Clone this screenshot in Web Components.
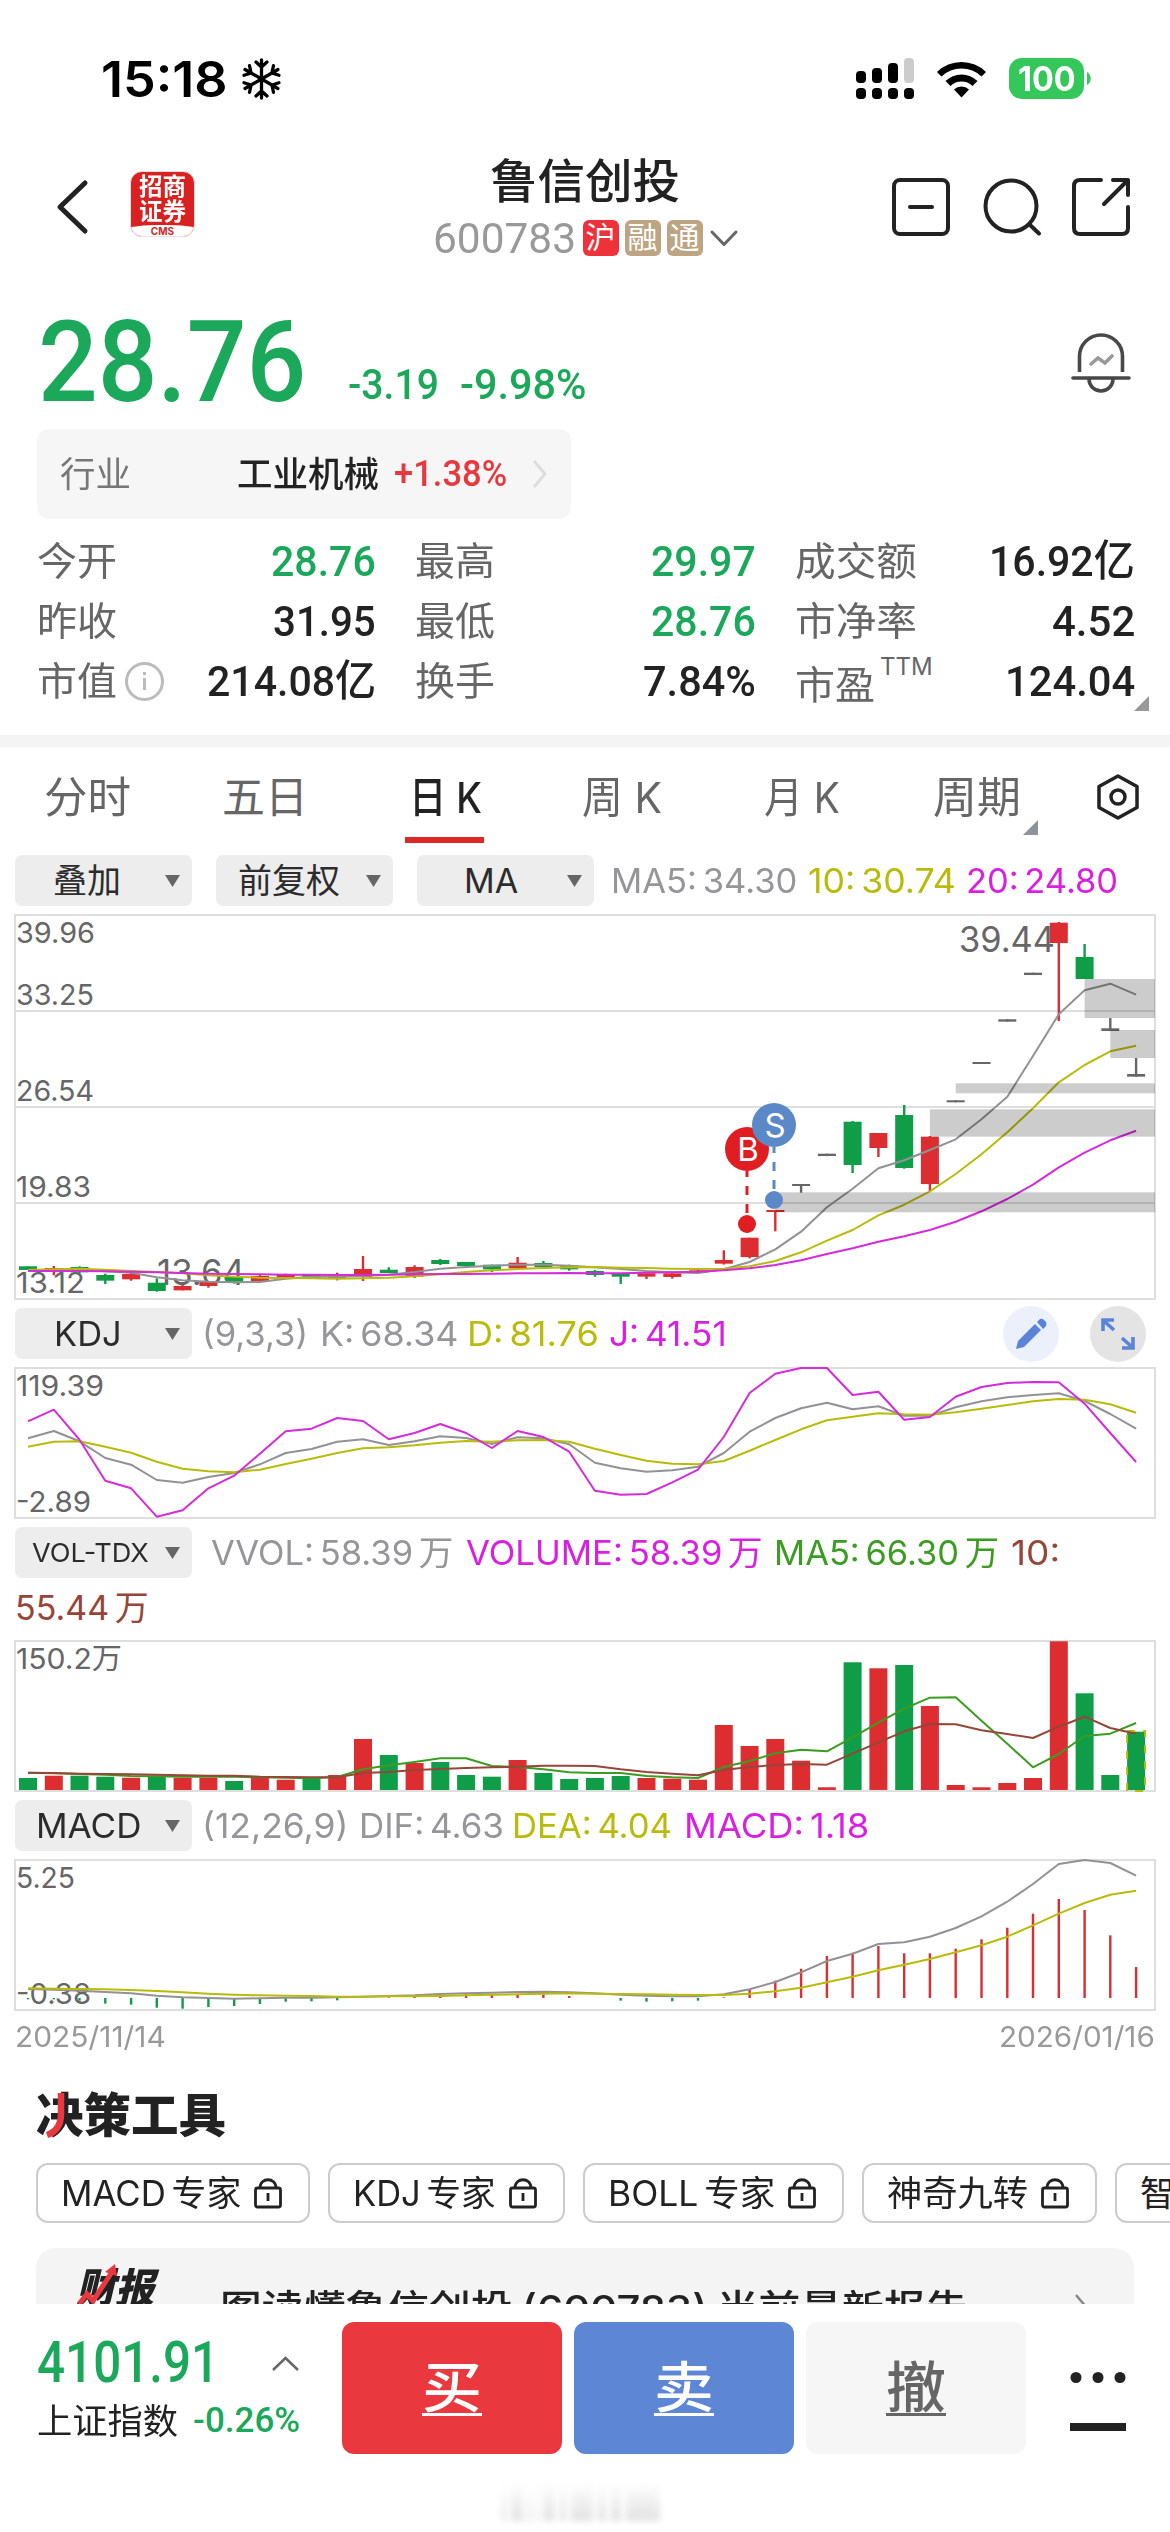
<!DOCTYPE html>
<html lang="zh-CN">
<head>
<meta charset="utf-8">
<meta name="viewport" content="width=1170">
<title>鲁信创投 600783</title>
<style>
   html, body {
      margin: 0;
      padding: 0;
      background: #fff;
   }
   body {
      width: 1170px;
      height: 2532px;
      overflow: hidden;
      --ui: Inter, "Noto Sans CJK SC", sans-serif;
      --num: Roboto, "Noto Sans CJK SC", sans-serif;
      --green: #1ba85a;
      --red: #e8383d;
      --ink: #222;
      --grey: #666;
      font-family: var(--ui);
      color: var(--ink);
   }
</style>
</head>
<body>
<stock-page></stock-page>

<script>
class Part extends HTMLElement {
   constructor() {
      super();
      this.shadow = this.attachShadow({ mode: "open" });
      const template = document.createElement("template");
      template.innerHTML = `<style>
         *, *::before, *::after { box-sizing: border-box; }
         :host { display: flex; box-sizing: border-box; white-space: nowrap; }
         svg { display: block; flex: none; overflow: visible; }
         svg:not([fill]) { fill: none; }
         ${this.css()}</style>${this.html()}`;
      this.shadow.appendChild(template.content.cloneNode(true));
   }
   css() { return ""; }
   html() { return "<slot></slot>"; }
}

/* text squeezed or stretched to a given width: <fit-text w="120"> */
class FitText extends Part {
   css() {
      return `
      :host { display: block; flex: none; }
      span { display: inline-block; transform-origin: 0 50%; }
      `;
   }
   html() { return `<span><slot></slot></span>`; }
   connectedCallback() {
      const span = this.shadow.querySelector("span");
      const w = Number(this.getAttribute("w"));
      const natural = span.offsetWidth;
      this.style.width = `${w}px`;
      if (natural) span.style.transform = `scaleX(${w / natural})`;
   }
}

class StatusBar extends Part {
   css() {
      return `
      :host { height: 140px; padding: 17px 79px 0 101px; align-items: center; color: #000; }
      .time { font-size: 50px; line-height: 60px; font-weight: 600; }
      .flake { margin-left: 15px; }
      .signal { margin-left: auto; }
      .wifi { margin-left: 22px; }
      .battery {
         width: 75px; height: 41px; margin-left: 22px; border-radius: 13px; background: #34c759;
         color: #fff; font-size: 34px; line-height: 41px; font-weight: 700;
         display: flex; justify-content: center;
      }
      .nub { margin-left: 3px; }
      `;
   }
   html() {
      const arm = `<path d="M0 0V-19M-5.500-17L0-12L5.500-17"/>`;
      const arms = [0, 60, 120, 180, 240, 300].map((a) => `<g transform="rotate(${a})">${arm}</g>`).join("");
      return `
      <fit-text class="time" w="127">15:18</fit-text>
      <svg class="flake" width="37" height="42" viewBox="-18.5 -21 37 42" stroke="#000" stroke-width="3.300" stroke-linecap="round" stroke-linejoin="round">${arms}</svg>
      <svg class="signal" width="58" height="41" fill="#000">
         <rect y="13" width="10" height="12" rx="4"/><rect x="16" y="10" width="10" height="15" rx="4"/>
         <rect x="32" y="5" width="10" height="20" rx="4"/><rect x="48" width="10" height="25" rx="4" fill="#ccc"/>
         <rect y="30" width="10" height="11" rx="4"/><rect x="16" y="30" width="10" height="11" rx="4"/>
         <rect x="32" y="30" width="10" height="11" rx="4"/><rect x="48" y="30" width="10" height="11" rx="4"/>
      </svg>
      <svg class="wifi" width="51" height="38" viewBox="0 0 51 38" fill="#000">
         <path d="M1 12A35 35 0 0 1 50 12L45.500 16.500A29 29 0 0 0 5.500 16.500Z"/>
         <path d="M9.500 21A23 23 0 0 1 41.500 21L36.500 26A16 16 0 0 0 14.500 26Z"/>
         <path d="M18 29.500A11 11 0 0 1 33 29.500L25.500 37.500Z"/>
      </svg>
      <div class="battery"><fit-text w="58">100</fit-text></div>
      <svg class="nub" width="4" height="13"><path d="M0 0C5 3 5 10 0 13Z" fill="#34c759"/></svg>
      `;
   }
}

class NavBar extends Part {
   css() {
      return `
      :host { height: 140px; padding: 0 40px 0 57px; justify-content: space-between; }
      svg { stroke: #222; stroke-width: 4; stroke-linecap: round; stroke-linejoin: round; }
      .side { display: flex; width: 240px; padding-top: 38px; }
      .right { justify-content: flex-end; gap: 32px; width: 260px; }
      .back { margin-top: 3px; }
      .logo {
         width: 65px; height: 66px; margin: -7px 0 0 43px; border-radius: 12px; overflow: hidden;
         background: #d92121; color: #fff; font-weight: 700; font-size: 24px; line-height: 25px; text-align: center;
         border: 1px solid #f1dede; padding-top: 2px;
      }
      .logo small { display: block; height: 14px; margin-top: 1px; background: #fff; color: #c8282b; font-size: 10px; line-height: 12px; border-radius: 28px 28px 0 0 / 3px 3px 0 0; }
      .logo fit-text { margin: 0 auto; }
      .mid { display: flex; flex-direction: column; align-items: center; width: 320px; }
      .name { font-size: 47px; line-height: 60px; margin: 11px 0 0 2px; font-weight: 500; }
      .code { display: flex; align-items: center; height: 54px; margin-left: 2px; color: #999; font: 43px/54px var(--num); }
      .tag { width: 36px; height: 36px; border-radius: 6px; background: #bda583; color: #fff; font-size: 30px; line-height: 36px; text-align: center; margin-left: 6px; }
      .tag.sh { background: #ef3239; margin-left: 7px; }
      .code svg { margin-left: 8px; stroke: #666; stroke-width: 3; }
      `;
   }
   html() {
      return `
      <div class="side">
         <svg class="back" width="30" height="52"><path d="M28 2L3 26L28 50" stroke-width="5"/></svg>
         <div class="logo"><fit-text w="47">招商</fit-text><fit-text w="47">证券</fit-text><small>CMS</small></div>
      </div>
      <div class="mid">
         <fit-text class="name" w="190">鲁信创投</fit-text>
         <div class="code"><fit-text w="143">600783</fit-text>
            <div class="tag sh">沪</div><div class="tag">融</div><div class="tag">通</div>
            <svg width="26" height="15"><path d="M1 1L13 13.500L25 1"/></svg>
         </div>
      </div>
      <div class="side right">
         <svg width="58" height="58"><rect x="2" y="2" width="54" height="54" rx="6"/><path d="M18 29H40"/></svg>
         <svg width="58" height="58"><circle cx="29" cy="28" r="25.500"/><path d="M47.500 46.500L57 55.500"/></svg>
         <svg width="58" height="58"><path d="M29 2H8Q2 2 2 8V50Q2 56 8 56H50Q56 56 56 50V29M41 2H56V17M56 2L32 26"/></svg>
      </div>
      `;
   }
}

class PriceHead extends Part {
   css() {
      return `
      :host { height: 149px; padding: 0 39px 0 38px; color: var(--green); font-family: var(--num); font-weight: 500; }
      .price { font-size: 113px; line-height: 120px; margin-top: 23px; }
      .diff { font-size: 43px; line-height: 50px; margin-top: 79px; margin-left: 42px; }
      .pct { margin-left: 21px; }
      svg { margin: 53px 0 0 auto; }
      `;
   }
   html() {
      return `
      <fit-text class="price" w="268">28.76</fit-text>
      <fit-text class="diff" w="91">-3.19</fit-text>
      <fit-text class="diff pct" w="127">-9.98%</fit-text>
      <svg width="60" height="61" stroke="#484848" stroke-width="3.600" stroke-linecap="round">
         <path d="M8.500 39V23.500A21.500 21.500 0 0 1 51.500 23.500V39" stroke-linecap="butt"/><path d="M2 45H58M18 46A12 12 0 0 0 42 46"/>
         <path d="M20 31L27 25L34 30L41 23" stroke="#999"/>
      </svg>
      `;
   }
}

class IndustryStrip extends Part {
   css() {
      return `
      :host { width: 534px; height: 90px; margin-left: 37px; border-radius: 12px; background: #f6f6f6; padding: 0 23px; align-items: center; font-size: 35px; line-height: 60px; }
      .label { color: #777; }
      .name { margin-left: 106px; font-weight: 500; }
      .pct { margin-left: 15px; font: 500 37px/60px var(--num); color: var(--red); }
      svg { margin-left: auto; }
      `;
   }
   html() {
      return `
      <fit-text class="label" w="71">行业</fit-text>
      <fit-text class="name" w="142">工业机械</fit-text>
      <fit-text class="pct" w="113">+1.38%</fit-text>
      <svg width="16" height="30"><path d="M2 2L13 15L2 28" stroke="#ddd" stroke-width="3"/></svg>
      `;
   }
}

class QuoteCell extends Part {
   css() {
      return `
      :host { height: 60px; justify-content: space-between; align-items: center; font-size: 39px; line-height: 60px; color: var(--grey); }
      .label { display: flex; align-items: center; }
      .val { font: 500 43px/60px var(--num); color: var(--ink); }
      .val.down { color: var(--green); }
      sup { font-size: 24px; line-height: 30px; margin: -28px 0 0 5px; }
      .sunk { margin-top: 7px; }
      svg { margin-left: 8px; }
      `;
   }
   html() {
      const attr = (name) => this.getAttribute(name);
      const sup = attr("sup");
      const info = this.hasAttribute("info")
         ? `<svg width="39" height="39" stroke="#bbb" stroke-width="3"><circle cx="19.500" cy="19.500" r="18"/><path d="M19.500 16V28M19.500 10V13"/></svg>`
         : "";
      return `
      <div class="label"><fit-text class="${sup ? "sunk" : ""}" w="${attr("lw")}">${attr("label")}</fit-text>${sup ? `<sup>${sup}</sup>` : ""}${info}</div>
      <fit-text class="val ${attr("tone") || ""}" w="${attr("vw")}">${attr("value")}</fit-text>
      `;
   }
}

class QuoteGrid extends Part {
   css() {
      return `
      :host { display: grid; height: 216px; padding: 12px 35px 0 37px; grid-template-columns: 339px 341px 340px; grid-auto-rows: 60px; column-gap: 39px; position: relative; }
      svg { position: absolute; right: 21px; bottom: 24px; }
      `;
   }
   html() {
      const cells = [
         ["今开", 80, "28.76", 105, `tone="down"`], ["最高", 80, "29.97", 105, `tone="down"`], ["成交额", 122, "16.92亿", 146, ""],
         ["昨收", 80, "31.95", 103, ""], ["最低", 80, "28.76", 105, `tone="down"`], ["市净率", 122, "4.52", 83, ""],
         ["市值", 80, "214.08亿", 169, "info"], ["换手", 80, "7.84%", 113, ""], ["市盈", 80, "124.04", 130, `sup="TTM"`],
      ];
      return cells.map(([label, lw, value, vw, extra]) =>
         `<quote-cell label="${label}" lw="${lw}" value="${value}" vw="${vw}" ${extra}></quote-cell>`).join("")
         + `<svg width="15" height="15"><path d="M15 0V15H0Z" fill="#999"/></svg>`;
   }
}

class PeriodTabs extends Part {
   css() {
      return `
      :host { height: 120px; border-top: 12px solid #f4f4f4; padding-left: 44px; font-size: 43px; line-height: 60px; color: var(--grey); }
      div { padding-top: 20px; height: 96px; position: relative; margin-right: var(--gap); }
      .on { color: var(--ink); font-weight: 500; border-bottom: 6px solid #e02828; padding-left: 4px; padding-right: 2px; }
      .corner { position: absolute; right: -17px; bottom: 8px; }
      .hex { margin-top: 27px; }
      `;
   }
   html() {
      return `
      <div style="--gap:91px"><fit-text w="87">分时</fit-text></div>
      <div style="--gap:97px"><fit-text w="86">五日</fit-text></div>
      <div class="on" style="--gap:98px"><fit-text w="73">日 K</fit-text></div>
      <div style="--gap:102px"><fit-text w="80">周 K</fit-text></div>
      <div style="--gap:93px"><fit-text w="76">月 K</fit-text></div>
      <div style="--gap:75px"><fit-text w="88">周期</fit-text><svg class="corner" width="15" height="15"><path d="M15 0V15H0Z" fill="#8c939b"/></svg></div>
      <svg class="hex" width="44" height="46" stroke="#222" stroke-width="3.500" stroke-linejoin="round"><path d="M22 2L41 12.500V33.500L22 44L3 33.500V12.500Z"/><circle cx="22" cy="23" r="7"/></svg>
      `;
   }
}

/* grey dropdown in front of each indicator line */
class DropButton extends Part {
   css() {
      return `
      :host { width: 177px; height: 51px; flex: none; border-radius: 7px; background: #ededed; align-items: center; font-size: 34px; line-height: 51px; color: #2c2c2c; }
      .box { flex: 1; display: flex; justify-content: center; padding-right: var(--pull, 0px); }
      svg { margin-right: 12px; }
      `;
   }
   html() {
      return `<div class="box"><slot></slot></div><svg width="15" height="12"><path d="M0 0H15L7.500 12Z" fill="#666"/></svg>`;
   }
}

/* row of indicator values; the colour name is the attribute of each child */
class IndicatorRow extends Part {
   css() {
      return `
      :host { height: 51px; padding-left: 15px; align-items: center; font-size: 34px; line-height: 51px; word-spacing: -4px; }
      ::slotted([grey]) { color: #969699; }
      ::slotted([olive]) { color: #b9bb0b; }
      ::slotted([pink]) { color: #d91fdf; }
      ::slotted([moss]) { color: #3b9c22; }
      ::slotted([rust]) { color: #964538; }
      `;
   }
}

const PITCH = 25.77; // distance between candles
const FIRST = 13; // centre of first candle
const px = (i) => (FIRST + PITCH * i).toFixed(1);

/* Frame with a plot. Series values count thirds of a pixel downwards, "zero" is the value at the frame's top. */
class PlotPanel extends Part {
   css() {
      return `
      :host { height: ${this.h}px; margin: 0 15px; }
      text { font-family: var(--ui); font-size: 29px; fill: #666; }
      .ln { stroke-width: 2; stroke-linejoin: round; }
      `;
   }
   py(v) { return ((v - this.zero) / 3).toFixed(1); }
   line(values, color, width = 2) {
      const pts = values.map((v, i) => `${px(i)},${this.py(v)}`).join(" ");
      return `<polyline class="ln" points="${pts}" stroke="${color}" stroke-width="${width}"/>`;
   }
   bar(i, from, to, color, width = 18) {
      const top = Math.min(from, to);
      return `<rect x="${px(i) - width / 2}" y="${this.py(top)}" width="${width}" height="${Math.max(Math.abs(to - from) / 3, 0.7)}" fill="${color}"/>`;
   }
   label(text, x, y, w, size = 29) {
      return `<text x="${x}" y="${y}" textLength="${w}" lengthAdjust="spacingAndGlyphs" style="font-size:${size}px">${text}</text>`;
   }
   html() {
      return `<svg width="1140" height="${this.h}"><rect x="0" y="0" width="1140" height="${this.h}" stroke="#dedede" stroke-width="2"/>${this.plot()}</svg>`;
   }
}

class CandleChart extends PlotPanel {
   get h() { return 384; }
   get zero() { return 45; }
   plot() {
      const R = "#dc2d30", G = "#0f9d48", K = "#666";
      // colour, body top, body bottom, wick top, wick bottom
      const candles = [
         [G, 1099, 1110, 1099, 1110], [R, 1104, 1112, 1098, 1126], [G, 1101, 1117, 1099, 1120], [G, 1125, 1142, 1121, 1152],
         [R, 1122, 1138, 1118, 1142], [G, 1148, 1173, 1135, 1175], [R, 1158, 1171, 1154, 1171], [R, 1146, 1158, 1143, 1163],
         [G, 1132, 1147, 1129, 1151], [R, 1128, 1144, 1124, 1147], [R, 1122, 1133, 1121, 1133], [G, 1124, 1134, 1122, 1134],
         [R, 1126, 1136, 1118, 1141], [R, 1107, 1131, 1068, 1143], [G, 1109, 1119, 1102, 1119], [R, 1101, 1130, 1096, 1134],
         [G, 1080, 1092, 1077, 1095], [G, 1086, 1098, 1086, 1099], [G, 1094, 1108, 1094, 1116], [R, 1088, 1105, 1071, 1106],
         [G, 1089, 1101, 1083, 1103], [G, 1097, 1108, 1094, 1112], [G, 1113, 1125, 1110, 1130], [G, 1121, 1130, 1120, 1152],
         [R, 1120, 1130, 1120, 1137], [R, 1120, 1131, 1120, 1136], [R, 1111, 1119, 1110, 1120], [R, 1080, 1091, 1051, 1094],
         [R, 1013, 1071, 1013, 1075], [R, 930, 936, 930, 994], [K, 852, 858, 852, 878], [K, 761, 768, 761, 768],
         [G, 665, 795, 663, 819], [R, 699, 744, 699, 771], [G, 645, 804, 615, 806], [R, 710, 852, 708, 874],
         [K, 601, 607, 601, 607], [K, 486, 492, 486, 492], [K, 358, 365, 358, 365], [K, 218, 225, 218, 225],
         [R, 68, 129, 66, 363], [G, 171, 237, 132, 237], [K, 385, 393, 354, 393], [K, 522, 530, 474, 530],
      ];
      const ma5 = [1110, 1110, 1110, 1114, 1118, 1132, 1141, 1145, 1147, 1146, 1136, 1130, 1130, 1128, 1124, 1116, 1106, 1101, 1097, 1094, 1094, 1097, 1102, 1107, 1113, 1117, 1119, 1108, 1086, 1048, 995, 922, 866, 805, 781, 750, 718, 658, 590, 468, 343, 271, 251, 284];
      const ma10 = [1110, 1108, 1106, 1109, 1113, 1116, 1120, 1126, 1130, 1133, 1134, 1135, 1136, 1135, 1133, 1129, 1123, 1116, 1111, 1107, 1104, 1102, 1101, 1103, 1104, 1106, 1107, 1106, 1099, 1083, 1057, 1022, 990, 946, 914, 874, 822, 763, 697, 625, 547, 495, 454, 437];
      const ma20 = [1113, 1113, 1113, 1114, 1115, 1117, 1119, 1121, 1122, 1123, 1124, 1124, 1125, 1125, 1124, 1123, 1122, 1122, 1121, 1120, 1120, 1119, 1120, 1120, 1118, 1117, 1115, 1111, 1105, 1095, 1081, 1062, 1045, 1025, 1009, 990, 965, 934, 897, 854, 802, 758, 721, 692];
      const gaps = [[41, 237, 354], [42, 390, 474], [36, 550, 580], [35, 628, 710], [29, 877, 937]];

      let svg = [96, 192, 288].map((y) => `<path d="M0 ${y}H1140" stroke="#dedede" stroke-width="2"/>`).join("");
      svg += this.label("39.96", 1, 28, 79) + this.label("33.25", 1, 90, 78) + this.label("26.54", 1, 186, 78);
      svg += this.label("19.83", 1, 282, 75) + this.label("13.12", 1, 378, 69);
      svg += this.label("39.44", 944, 37, 96, 35) + this.label("13.64", 142, 370, 88, 35);
      candles.forEach(([color, top, bottom, high, low], i) => {
         svg += this.bar(i, high, low, color, 2.4) + this.bar(i, top, bottom, color, 18);
      });
      svg += this.line(ma5, "#929295") + this.line(ma10, "#b9bb0b") + this.line(ma20, "#d42bdb");
      gaps.forEach(([i, top, bottom]) => {
         svg += `<rect x="${px(i)}" y="${this.py(top)}" width="${1140 - px(i)}" height="${(bottom - top) / 3}" fill="#000" fill-opacity=".2"/>`;
      });
      return svg + this.marker("B", 732, 234, 309, "#e01e22") + this.marker("S", 759, 210, 285, "#5b88c7");
   }
   marker(letter, x, y, dot, color) {
      return `<path d="M${x} ${y + 22}V${dot}" stroke="${color}" stroke-width="3" stroke-dasharray="9 9" stroke-dashoffset="3"/>
         <circle cx="${x}" cy="${y}" r="22" fill="${color}"/><circle cx="${x}" cy="${dot}" r="9" fill="${color}"/>
         <text x="${x + 1}" y="${y + 12}" text-anchor="middle" style="font-size:33px;fill:#fff">${letter}</text>`;
   }
}

class KdjChart extends PlotPanel {
   get h() { return 150; }
   get zero() { return 205; }
   plot() {
      const k = [416, 394, 425, 475, 495, 541, 549, 532, 520, 494, 460, 448, 426, 419, 436, 425, 410, 415, 433, 413, 416, 434, 489, 506, 516, 512, 501, 460, 396, 355, 326, 309, 329, 320, 348, 348, 323, 305, 293, 286, 281, 304, 343, 387];
      const d = [441, 426, 425, 441, 459, 486, 507, 515, 518, 510, 493, 477, 460, 446, 443, 437, 429, 424, 426, 422, 421, 426, 447, 466, 483, 492, 494, 484, 453, 421, 389, 362, 351, 341, 344, 345, 338, 327, 316, 305, 298, 300, 314, 339];
      const j = [365, 330, 420, 543, 566, 651, 632, 566, 528, 462, 395, 387, 355, 364, 419, 400, 373, 400, 445, 394, 412, 456, 573, 585, 583, 548, 510, 412, 280, 222, 205, 205, 286, 276, 360, 352, 291, 262, 250, 247, 248, 312, 400, 487];
      return this.label("119.39", 1, 28, 88) + this.label("-2.89", 1, 144, 75)
         + this.line(k, "#929295") + this.line(d, "#b9bb0b") + this.line(j, "#d42bdb");
   }
}

class VolumeChart extends PlotPanel {
   get h() { return 150; }
   get zero() { return 93; }
   plot() {
      const up = "#dc2d30", down = "#0f9d48";
      const tops = [504, 497, 497, 500, 503, 499, 503, 503, 513, 503, 509, 506, 495, 387, 435, 459, 456, 495, 500, 450, 489, 507, 504, 498, 504, 506, 509, 345, 408, 387, 452, 532, 157, 175, 165, 288, 525, 532, 519, 504, 94, 250, 495, 365];
      const falling = [0, 2, 3, 5, 8, 11, 14, 16, 17, 18, 20, 21, 22, 23, 32, 34, 41, 42, 43];
      const ma5 = [488, 490, 492, 494, 498, 499, 500, 500, 500, 502, 503, 505, 501, 478, 466, 456, 445, 445, 468, 471, 478, 487, 489, 489, 498, 502, 504, 471, 453, 430, 419, 424, 382, 338, 296, 263, 262, 332, 401, 472, 432, 378, 371, 339];
      const ma10 = [488, 489, 491, 492, 493, 494, 496, 497, 497, 500, 501, 502, 502, 489, 486, 480, 477, 474, 472, 470, 467, 467, 468, 478, 486, 491, 496, 480, 471, 465, 462, 464, 431, 397, 364, 342, 343, 361, 372, 384, 350, 320, 354, 371];
      const bars = tops.map((v, i) => this.bar(i, v, 540, falling.includes(i) ? down : up)).join("");
      return this.label("150.2万", 1, 28, 106) + bars
         + `<rect x="${px(43) - 9}" y="90" width="18" height="60" stroke="#b9bb0b" stroke-width="2" stroke-dasharray="8 8"/>`
         + this.line(ma5, "#3b9c22") + this.line(ma10, "#964538");
   }
}

class MacdChart extends PlotPanel {
   get h() { return 150; }
   get zero() { return 750; }
   plot() {
      const axis = 1164;
      const hist = [1168, 1168, 1172, 1181, 1184, 1193, 1196, 1191, 1188, 1182, 1175, 1174, 1171, 1164, 1162, 1156, 1152, 1151, 1152, 1152, 1153, 1158, 1164, 1172, 1175, 1174, 1172, 1162, 1140, 1112, 1076, 1038, 1028, 1008, 1030, 1030, 1016, 988, 953, 911, 867, 900, 976, 1071];
      const dif = [1137, 1139, 1142, 1146, 1150, 1157, 1162, 1164, 1166, 1165, 1163, 1163, 1162, 1160, 1158, 1156, 1152, 1150, 1148, 1146, 1145, 1147, 1150, 1154, 1157, 1159, 1159, 1153, 1138, 1116, 1087, 1053, 1031, 1002, 997, 980, 954, 919, 875, 822, 762, 750, 759, 797];
      const dea = [1135, 1136, 1137, 1138, 1140, 1143, 1147, 1151, 1154, 1156, 1157, 1158, 1160, 1160, 1159, 1159, 1158, 1156, 1154, 1153, 1151, 1150, 1151, 1152, 1153, 1154, 1155, 1155, 1151, 1144, 1133, 1117, 1100, 1081, 1064, 1047, 1027, 1006, 980, 946, 911, 879, 854, 842];
      const bars = hist.map((v, i) => v == axis ? "" : this.bar(i, v, axis, v > axis ? "#0f9d48" : "#dc2d30", 2.4)).join("");
      return this.label("5.25", 1, 28, 59) + this.label("-0.38", 1, 144, 75)
         + bars + this.line(dif, "#929295") + this.line(dea, "#b9bb0b");
   }
}

class ToolChip extends Part {
   css() {
      return `
      :host { height: 60px; flex: none; border: 2px solid #ccc; border-radius: 12px; padding: 0 26px 0 23px; align-items: center; gap: 13px; font-size: 35px; line-height: 56px; word-spacing: -4px; }
      `;
   }
   html() {
      return `<slot></slot><svg width="28" height="31" stroke="#222" stroke-width="2.800"><rect x="1.500" y="10" width="25" height="19" rx="2"/><path d="M6 10C6-1 22-1 22 10M14 15V23"/></svg>`;
   }
}

class ToolSection extends Part {
   css() {
      return `
      :host { height: 239px; flex-direction: column; overflow: hidden; }
      .title { position: relative; font-size: 47px; line-height: 56px; font-weight: 900; margin: 22px 0 0 36px; }
      .title svg, .mark svg { position: absolute; left: 0; top: 0; }
      .chips { display: flex; gap: 18px; margin: 20px 0 0 36px; }
      .card { display: flex; width: 1098px; height: 130px; margin: 25px 0 0 36px; border-radius: 20px; background: #f4f4f4; padding: 0 30px 0 40px; }
      .mark { position: relative; font-size: 41px; line-height: 50px; font-weight: 900; font-style: italic; margin-top: 15px; }
      .head { margin: 36px 0 0 66px; font-size: 37px; line-height: 50px; font-weight: 500; word-spacing: -2px; }
      .go { margin: 45px 14px 0 auto; }
      `;
   }
   html() {
      return `
      <div class="title"><fit-text w="190">决策工具</fit-text>
         <svg width="60" height="56"><path d="M25 6V27C25 38 20 45 11 48" stroke="#ea3840" stroke-width="6.500"/></svg>
      </div>
      <div class="chips">
         <tool-chip><fit-text w="180">MACD 专家</fit-text></tool-chip>
         <tool-chip><fit-text w="143">KDJ 专家</fit-text></tool-chip>
         <tool-chip><fit-text w="167">BOLL 专家</fit-text></tool-chip>
         <tool-chip><fit-text w="141">神奇九转</fit-text></tool-chip>
         <tool-chip><fit-text w="70">智能</fit-text></tool-chip>
      </div>
      <div class="card">
         <div class="mark"><fit-text w="78">财报</fit-text>
            <svg width="80" height="50"><path d="M3 41L11 31L17 38L36 9" stroke="#ea3840" stroke-width="5"/><path d="M29 9L39 1L41 13Z" fill="#ea3840"/></svg>
         </div>
         <fit-text class="head" w="747">图读懂鲁信创投 (600783) 当前最新报告</fit-text>
         <svg class="go" width="16" height="30"><path d="M2 2L13 15L2 28" stroke="#888" stroke-width="2.500"/></svg>
      </div>
      `;
   }
}

class TradeButton extends Part {
   css() {
      return `
      :host { width: 220px; height: 132px; border-radius: 12px; justify-content: center; align-items: center; color: #fff; font-size: 55px; font-weight: 500; line-height: 80px; }
      :host([kind="buy"]) { background: #e9393e; }
      :host([kind="sell"]) { background: #5d86d5; }
      :host([kind="cancel"]) { background: #f6f6f6; color: #666; }
      div { height: 83px; display: flex; position: relative; }
      i { position: absolute; left: 0; right: 0; bottom: 14px; height: 3px; background: currentColor; }
      `;
   }
   html() { return `<div><slot></slot><i></i></div>`; }
}

class TradeBar extends Part {
   css() {
      return `
      :host { height: 228px; background: #fff; flex-direction: column; padding-top: 18px; }
      .row { display: flex; gap: 12px; padding-left: 37px; height: 132px; }
      .index { width: 293px; color: var(--green); }
      .top, .bot { display: flex; align-items: center; }
      .top { font: 500 57px/64px var(--num); height: 64px; margin-top: 9px; }
      .top svg { margin-left: 53px; }
      .bot { font: 500 35px/46px var(--num); margin-top: 3px; }
      .bot .name { font: 35px/46px var(--ui); color: var(--ink); margin-right: 15px; }
      .more { margin: 50px 0 0 32px; }
      .smear { display: flex; width: 170px; height: 40px; margin: 29px 0 0 502px; filter: blur(3px); gap: 5px; opacity: .5; }
      .smear b { flex: none; height: 38px; background: linear-gradient(#fff, #c4c4c4); }
      `;
   }
   html() {
      const widths = [4, 12, 3, 2, 12, 6, 22, 8, 10, 34];
      return `
      <div class="row">
         <div class="index">
            <div class="top"><fit-text w="182">4101.91</fit-text><svg width="27" height="15"><path d="M1 14L13.500 2L26 14" stroke="#666" stroke-width="2.500"/></svg></div>
            <div class="bot"><fit-text class="name" w="141">上证指数</fit-text><fit-text w="107">-0.26%</fit-text></div>
         </div>
         <trade-button kind="buy"><fit-text w="60">买</fit-text></trade-button>
         <trade-button kind="sell"><fit-text w="60">卖</fit-text></trade-button>
         <trade-button kind="cancel"><fit-text w="60">撤</fit-text></trade-button>
         <svg class="more" width="56" height="60" fill="#222"><circle cx="6" cy="5.500" r="5.500"/><circle cx="28" cy="5.500" r="5.500"/><circle cx="50" cy="5.500" r="5.500"/><rect y="51" width="56" height="8"/></svg>
      </div>
      <div class="smear">${widths.map((w) => `<b style="width:${w}px"></b>`).join("")}</div>
      `;
   }
}

class StockPage extends Part {
   css() {
      return `
      :host { width: 1170px; height: 2532px; flex-direction: column; background: #fff; }
      :host > * { flex: none; }
      indicator-row { flex: none; margin: 9px 0; }
      .round { display: flex; width: 56px; height: 56px; border-radius: 50%; background: #ebf0fb; align-items: center; justify-content: center; }
      .round.dark { background: #e4e4e4; }
      .second { margin-top: -5px; margin-bottom: 8px; }
      .dates { display: flex; justify-content: space-between; height: 55px; padding: 0 15px; font-size: 28.500px; line-height: 54px; color: #999; }
      .vol { font-size: 26px; }
      `;
   }
   html() {
      return `
      <status-bar></status-bar>
      <nav-bar></nav-bar>
      <price-head></price-head>
      <industry-strip></industry-strip>
      <quote-grid></quote-grid>
      <period-tabs></period-tabs>
      <indicator-row style="margin-top:0">
         <drop-button style="--pull:6px"><fit-text w="68">叠加</fit-text></drop-button>
         <drop-button style="margin-left:24px;--pull:4px"><fit-text w="102">前复权</fit-text></drop-button>
         <drop-button style="margin-left:24px;--pull:2px"><fit-text w="54">MA</fit-text></drop-button>
         <fit-text grey style="margin-left:17px" w="186">MA5: 34.30</fit-text>
         <fit-text olive style="margin-left:11px" w="148">10: 30.74</fit-text>
         <fit-text pink style="margin-left:10px" w="152">20: 24.80</fit-text>
      </indicator-row>
      <candle-chart></candle-chart>
      <indicator-row>
         <drop-button style="--pull:4px"><fit-text w="68">KDJ</fit-text></drop-button>
         <fit-text grey style="margin-left:10px" w="106">(9,3,3)</fit-text>
         <fit-text grey style="margin-left:12px" w="138">K: 68.34</fit-text>
         <fit-text olive style="margin-left:9px" w="132">D: 81.76</fit-text>
         <fit-text pink style="margin-left:10px" w="118">J: 41.51</fit-text>
         <div class="round" style="margin-left:276px"><svg width="32" height="32" viewBox="0 0 32 32" fill="#5b83d8"><path d="M1 31L3 23L20 6L26 12L9 29ZM22 4L25 1Q27 0 29 2L31 4Q32 6 31 8L28 11Z"/></svg></div>
         <div class="round dark" style="margin-left:31px"><svg width="34" height="34" viewBox="0 0 34 34" stroke="#5b83d8" stroke-width="3.600"><path d="M2 14V3H13M3 4L13 13M32 20V31H21M31 30L21 21"/></svg></div>
      </indicator-row>
      <kdj-chart></kdj-chart>
      <indicator-row>
         <drop-button><fit-text class="vol" w="117">VOL-TDX</fit-text></drop-button>
         <fit-text grey style="margin-left:19px" w="242">VVOL: 58.39 万</fit-text>
         <fit-text pink style="margin-left:13px" w="297">VOLUME: 58.39 万</fit-text>
         <fit-text moss style="margin-left:11px" w="225">MA5: 66.30 万</fit-text>
         <fit-text rust style="margin-left:12px" w="49">10:</fit-text>
      </indicator-row>
      <indicator-row class="second"><fit-text rust w="134">55.44 万</fit-text></indicator-row>
      <volume-chart></volume-chart>
      <indicator-row>
         <drop-button style="--pull:4px"><fit-text w="105">MACD</fit-text></drop-button>
         <fit-text grey style="margin-left:10px" w="146">(12,26,9)</fit-text>
         <fit-text grey style="margin-left:11px" w="145">DIF: 4.63</fit-text>
         <fit-text olive style="margin-left:8px" w="160">DEA: 4.04</fit-text>
         <fit-text pink style="margin-left:12px" w="185">MACD: 1.18</fit-text>
      </indicator-row>
      <macd-chart></macd-chart>
      <div class="dates"><fit-text w="151">2025/11/14</fit-text><fit-text w="156">2026/01/16</fit-text></div>
      <tool-section></tool-section>
      <trade-bar></trade-bar>
      `;
   }
}

customElements.define("stock-page", StockPage);
customElements.define("status-bar", StatusBar);
customElements.define("nav-bar", NavBar);
customElements.define("price-head", PriceHead);
customElements.define("industry-strip", IndustryStrip);
customElements.define("quote-grid", QuoteGrid);
customElements.define("quote-cell", QuoteCell);
customElements.define("period-tabs", PeriodTabs);
customElements.define("indicator-row", IndicatorRow);
customElements.define("drop-button", DropButton);
customElements.define("candle-chart", CandleChart);
customElements.define("kdj-chart", KdjChart);
customElements.define("volume-chart", VolumeChart);
customElements.define("macd-chart", MacdChart);
customElements.define("tool-section", ToolSection);
customElements.define("tool-chip", ToolChip);
customElements.define("trade-bar", TradeBar);
customElements.define("trade-button", TradeButton);
// last, so that its text is already in place when it is measured
customElements.define("fit-text", FitText);
</script>
</body>
</html>
